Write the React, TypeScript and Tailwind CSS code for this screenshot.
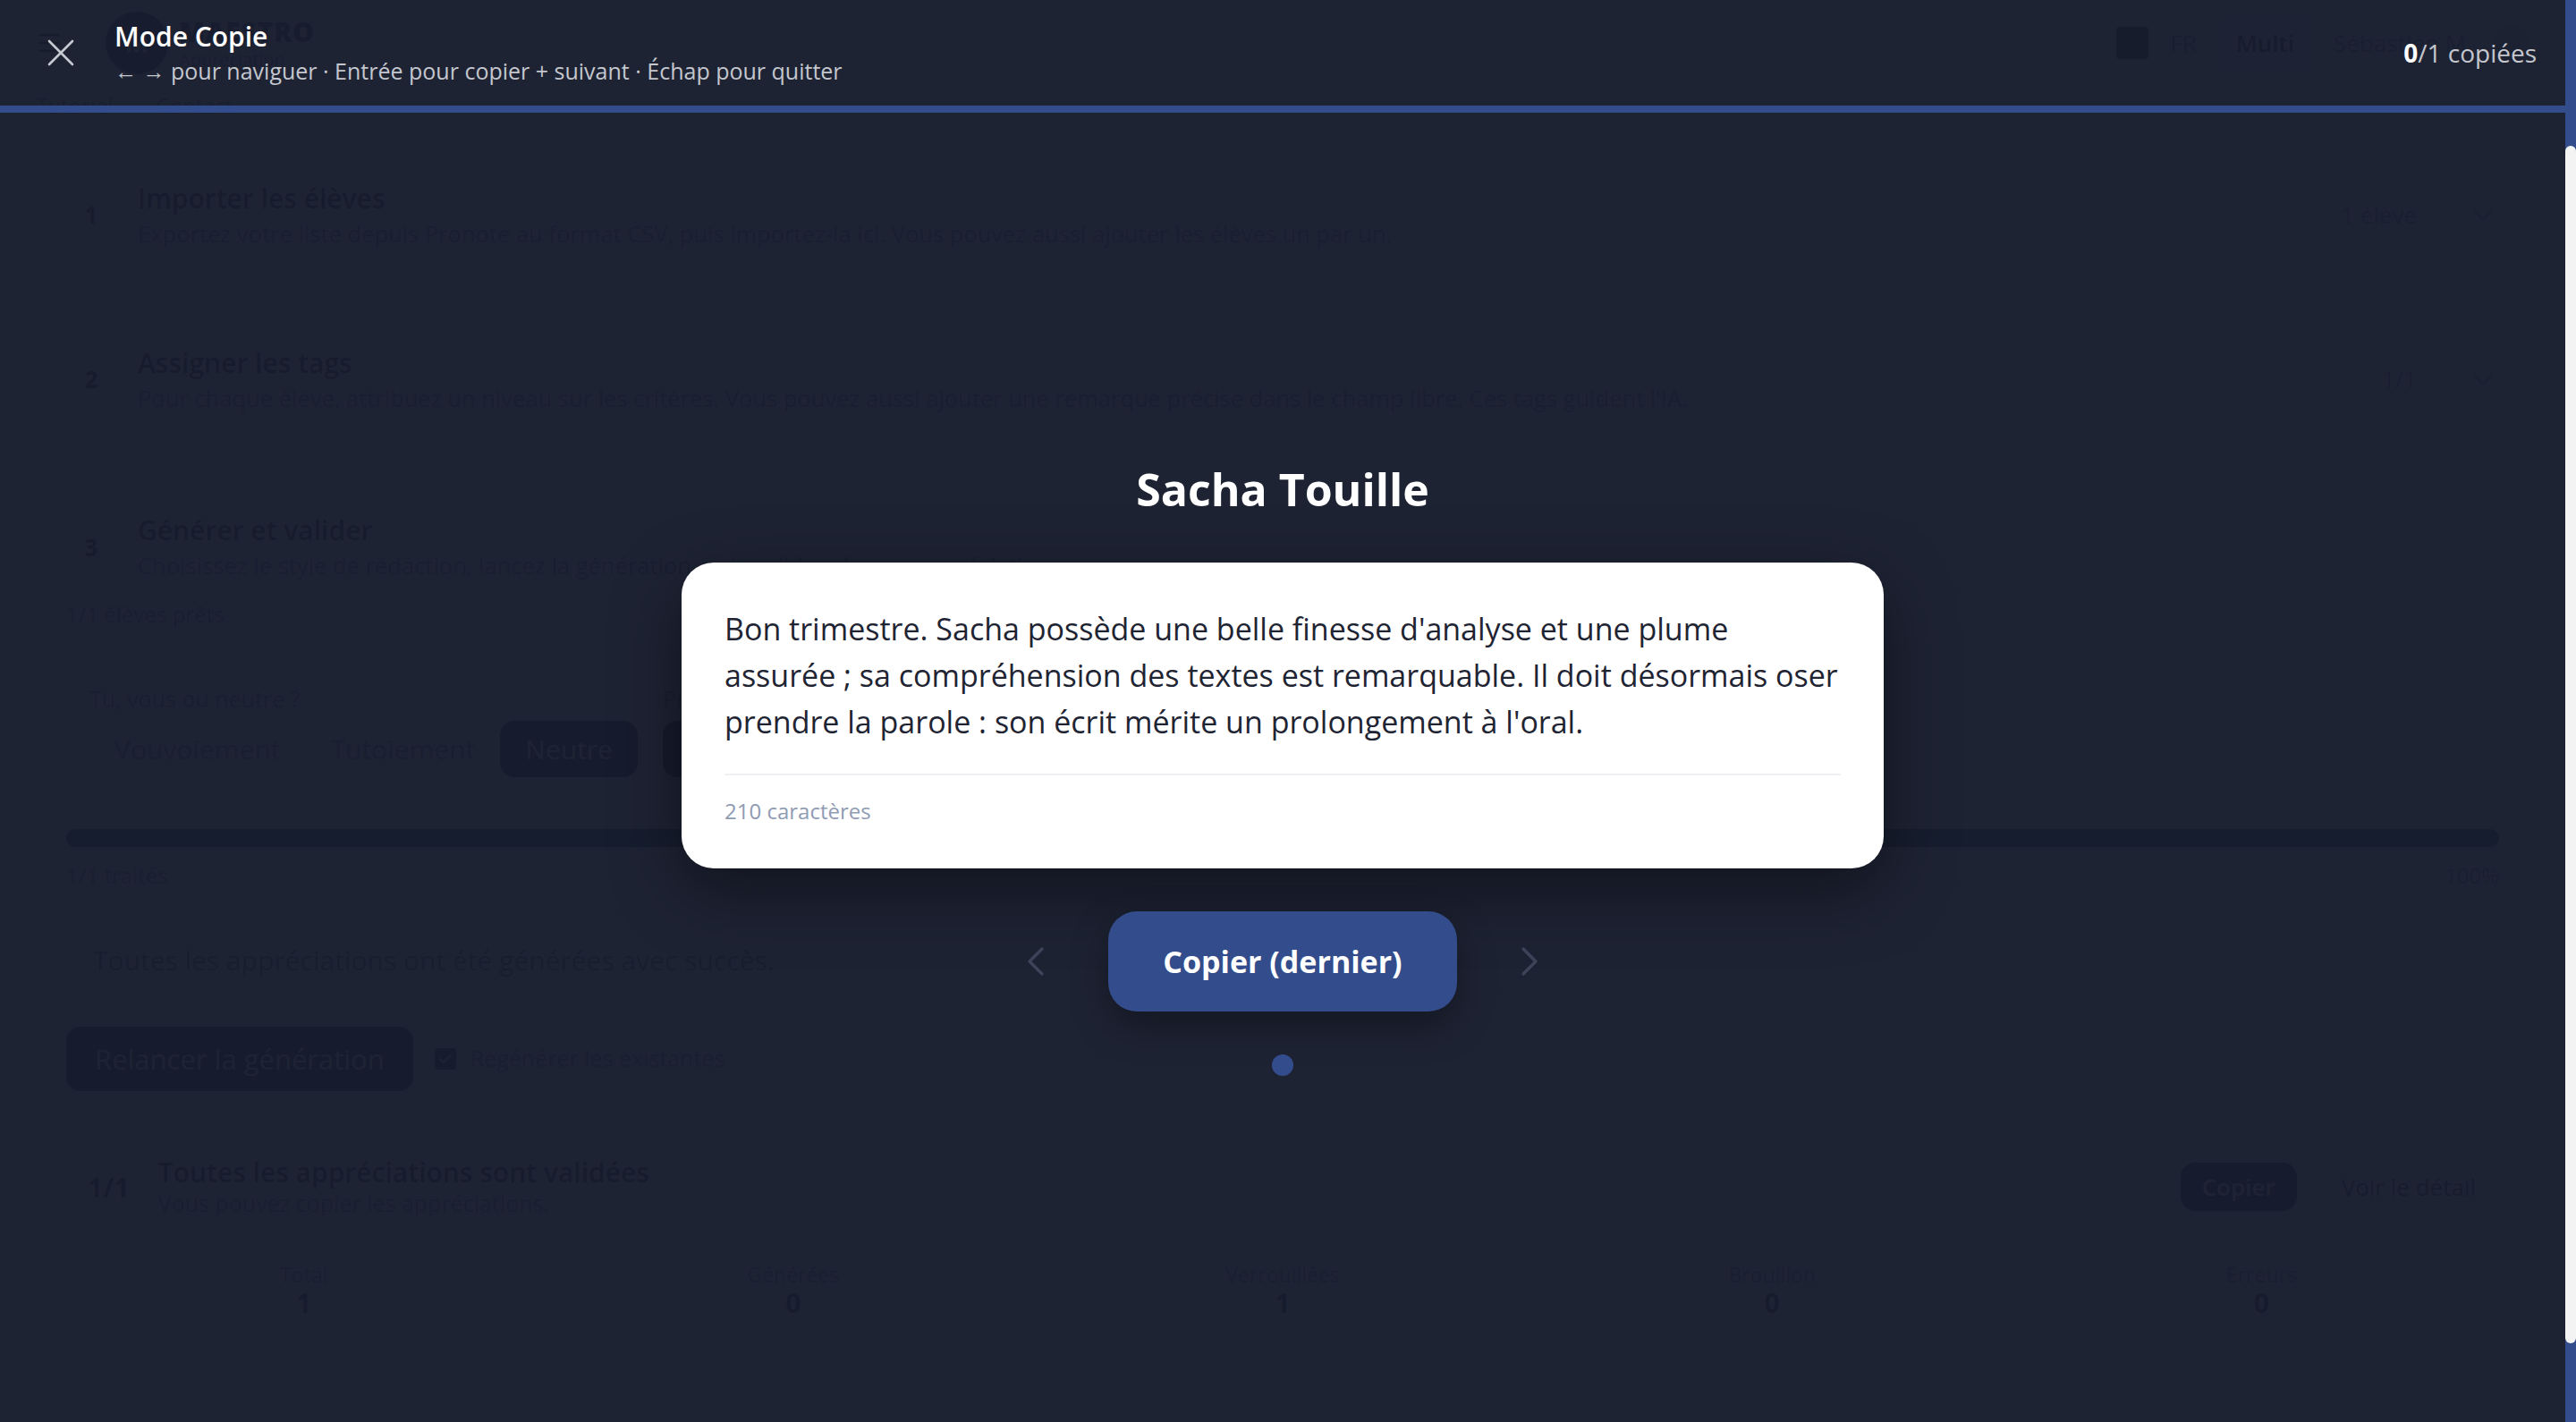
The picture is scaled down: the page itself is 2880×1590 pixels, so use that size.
import { Check, ChevronDown, ChevronLeft, ChevronRight, Menu, X } from "lucide-react";

const comment = [
  "Bon trimestre. Sacha possède une belle finesse d'analyse et une plume",
  "assurée ; sa compréhension des textes est remarquable. Il doit désormais oser",
  "prendre la parole : son écrit mérite un prolongement à l'oral.",
];

const stats = [
  { l: "Total", v: 1 },
  { l: "Générées", v: 0 },
  { l: "Verrouillées", v: 1 },
  { l: "Brouillon", v: 0 },
  { l: "Erreurs", v: 0 },
];

function StepCard({ n, title, desc, right }: { n: number; title: string; desc: string; right: string }) {
  return (
    <div className="flex h-[147px] items-center gap-6 rounded-3xl border-2 border-[#e5e9f1] bg-white px-8 pb-3">
      <div className="flex h-14 w-14 shrink-0 items-center justify-center rounded-full bg-[#e8ecf4] text-[26px] font-bold text-[#1f2433]">{n}</div>
      <div className="min-w-0 flex-1">
        <p className="text-[30px] font-semibold leading-9 text-[#1f2433]">{title}</p>
        <p className="mt-1 text-[25.5px] leading-[34px] text-[#5b6478]">{desc}</p>
      </div>
      <span className="text-[26px] text-[#5b6478]">{right}</span>
      <ChevronDown size={36} strokeWidth={1.5} className="ml-8 text-[#5b6478]" />
    </div>
  );
}

// the regular page, sitting behind the copy-mode overlay
function Workspace() {
  return (
    <div className="h-full bg-[#f4f6fa]">
      <div className="flex h-[96px] items-center px-10">
        <Menu size={30} className="text-[#1f2433]" />
        <div className="ml-12 flex h-[70px] w-[70px] items-center justify-center rounded-full bg-[#1f2a4a] text-[28px] font-bold text-white">M</div>
        <div className="ml-3 leading-tight">
          <p className="text-[30px] font-extrabold tracking-wide text-[#1f2a4a]">MAESTRO</p>
          <p className="text-[20px] text-[#5b6478]">Appréciation</p>
        </div>
        <div className="ml-auto flex items-center gap-6 text-[26px] text-[#5b6478]">
          <span className="h-9 w-9 rounded bg-[#1f2433]" />
          <span>FR</span>
          <span className="rounded-2xl bg-[#e3e8f2] px-5 py-3 font-semibold text-[#1f2433]">Multi</span>
          <span>Sébastien M.</span>
          <span className="h-10 w-10 rounded-full bg-[#c9d1e0]" />
        </div>
      </div>
      <div className="flex h-[44px] items-center gap-12 px-10 text-[24px] text-[#5b6478]">
        <span>Tutoriel</span>
        <span>Contact</span>
      </div>

      <div className="flex flex-col gap-[37px] px-10 pt-[33px]">
        <StepCard
          n={1}
          title="Importer les élèves"
          desc="Exportez votre liste depuis Pronote au format CSV, puis importez-la ici. Vous pouvez aussi ajouter les élèves un par un."
          right="1 élève"
        />
        <StepCard
          n={2}
          title="Assigner les tags"
          desc="Pour chaque élève, attribuez un niveau sur les critères. Vous pouvez aussi ajouter une remarque précise dans le champ libre. Ces tags guident l'IA."
          right="1/1"
        />

        <div className="rounded-3xl border-2 border-[#e5e9f1] bg-white px-8 pb-[34px] pt-8">
          <div className="flex items-center gap-6">
            <div className="flex h-14 w-14 shrink-0 items-center justify-center rounded-full bg-[#e8ecf4] text-[26px] font-bold text-[#1f2433]">3</div>
            <div>
              <p className="text-[30px] font-semibold leading-9 text-[#1f2433]">Générer et valider</p>
              <p className="mt-1 text-[25.5px] leading-[34px] text-[#5b6478]">
                Choisissez le style de rédaction, lancez la génération, puis validez chaque appréciation.
              </p>
            </div>
          </div>
          <p className="mt-[22px] text-[24px] leading-8 text-[#5b6478]">1/1 élèves prêts</p>

          <div className="mt-9 flex h-[150px] gap-7 rounded-2xl border-2 border-[#e5e9f1] px-6 pt-6">
            <div>
              <p className="text-[25px] leading-8 text-[#5b6478]">Tu, vous ou neutre ?</p>
              <div className="mt-[9px] flex h-[63px] items-center rounded-2xl bg-[#eef1f6] text-[30px] text-[#5b6478]">
                <span className="px-7">Vouvoiement</span>
                <span className="px-7">Tutoiement</span>
                <span className="flex h-full items-center rounded-2xl bg-[#0f172a] px-7 text-white">Neutre</span>
              </div>
            </div>
            <div>
              <p className="text-[25px] leading-8 text-[#5b6478]">Prénom ou pronom ?</p>
              <div className="mt-[9px] flex h-[63px] items-center gap-2 text-[30px] text-[#5b6478]">
                <span className="flex h-full items-center rounded-2xl bg-[#0f172a] px-7 text-white">Prénom</span>
                <span className="px-7">Il / Elle</span>
              </div>
            </div>
          </div>

          <div className="mt-[38px] h-5 rounded-full bg-[#0b3b3a]" />
          <div className="mt-4 flex justify-between text-[24px] leading-8 text-[#5b6478]">
            <span>1/1 traités</span>
            <span>100%</span>
          </div>

          <div className="mt-[37px] flex h-[82px] items-center rounded-2xl border-2 border-[#cfe9dc] bg-[#effaf4] px-7 text-[30px] text-[#1f5a3c]">
            Toutes les appréciations ont été générées avec succès.
          </div>

          <div className="mt-[34px] flex items-center gap-6">
            <button className="h-[72px] rounded-2xl bg-[#0f172a] px-8 text-[31px] text-white">Relancer la génération</button>
            <span className="flex h-6 w-6 items-center justify-center rounded bg-[#0f172a] text-white">
              <Check size={18} strokeWidth={3} />
            </span>
            <span className="-ml-2 text-[25px] text-[#5b6478]">Regénérer les existantes</span>
          </div>

          <div className="mt-[73px] flex items-center pl-6">
            <span className="text-[30px] font-bold text-[#1f2433]">1/1</span>
            <div className="ml-8">
              <p className="text-[30px] font-semibold leading-9 text-[#1f2433]">Toutes les appréciations sont validées</p>
              <p className="text-[25px] leading-8 text-[#5b6478]">Vous pouvez copier les appréciations.</p>
            </div>
            <button className="ml-auto h-[54px] rounded-2xl bg-[#0f172a] px-6 text-[26px] font-semibold text-white">Copier</button>
            <button className="ml-6 h-[54px] rounded-2xl border-2 border-[#e5e9f1] px-6 text-[26px] text-[#1f2433]">Voir le détail</button>
          </div>

          <div className="mt-[33px] grid grid-cols-5 gap-4">
            {stats.map((s) => (
              <div key={s.l} className="flex h-[98px] flex-col items-center justify-center rounded-2xl border-2 border-[#eef1f6] bg-[#f8f9fc]">
                <span className="text-[23px] leading-7 text-[#5b6478]">{s.l}</span>
                <span className="text-[30px] font-bold leading-9 text-[#1f2433]">{s.v}</span>
              </div>
            ))}
          </div>
        </div>
      </div>
    </div>
  );
}

function CopyMode() {
  return (
    <div className="absolute inset-0 flex flex-col bg-[#171c2d]/[0.97]">
      <header className="flex h-[126px] shrink-0 items-center border-b-8 border-[#324c8c] pl-10 pr-8">
        <button className="flex h-14 w-14 items-center justify-center text-[#c6c9d0]">
          <X size={52} strokeWidth={1.2} />
        </button>
        <div className="ml-8">
          <p className="text-[30px] font-semibold leading-9 text-white">Mode Copie</p>
          <p className="mt-1 text-[25px] leading-8 text-[#c4c7ce]">
            ← → pour naviguer · Entrée pour copier + suivant · Échap pour quitter
          </p>
        </div>
        <p className="ml-auto text-[28px] text-[#c4c7ce]">
          <span className="font-bold text-white">0</span>/1 copiées
        </p>
      </header>

      <main className="flex flex-1 flex-col items-center justify-center">
        <h2 className="text-[50px] font-bold leading-[68px] text-white">Sacha Touille</h2>

        <div className="mt-12 w-[1344px] rounded-[36px] bg-white p-12 shadow-[0_24px_80px_rgba(0,0,0,0.45)]">
          <p className="text-[34px] leading-[52px] text-[#1f2433]">
            {comment.map((line) => (
              <span key={line} className="block whitespace-nowrap">{line}</span>
            ))}
          </p>
          <div className="mt-8 border-t-2 border-[#eef0f4] pt-6">
            <span className="text-[24px] leading-8 text-[#8f9bb3]">210 caractères</span>
          </div>
        </div>

        <div className="mt-12 flex items-center gap-[73px]">
          <ChevronLeft size={56} strokeWidth={1.4} className="-mx-5 text-[#3d4459]" />
          <button className="h-[112px] w-[390px] rounded-[32px] bg-[#334c8b] text-[34px] font-bold text-white shadow-[0_16px_40px_rgba(0,0,0,0.35)]">
            Copier (dernier)
          </button>
          <ChevronRight size={56} strokeWidth={1.4} className="-mx-5 text-[#3d4459]" />
        </div>

        <span className="mt-12 h-6 w-6 rounded-full bg-[#334c8b]" />
      </main>
    </div>
  );
}

export default function App() {
  return (
    <div className="flex h-[1590px] w-full overflow-hidden font-['Open_Sans',sans-serif]">
      <div className="relative min-w-0 flex-1">
        <Workspace />
        <CopyMode />
      </div>
      {/* page scrollbar */}
      <div className="flex w-3 shrink-0 flex-col bg-[#324c8c]">
        <div className="h-[163px]" />
        <div className="h-[1339px] rounded-full bg-[#f3f3f3]" />
      </div>
    </div>
  );
}
